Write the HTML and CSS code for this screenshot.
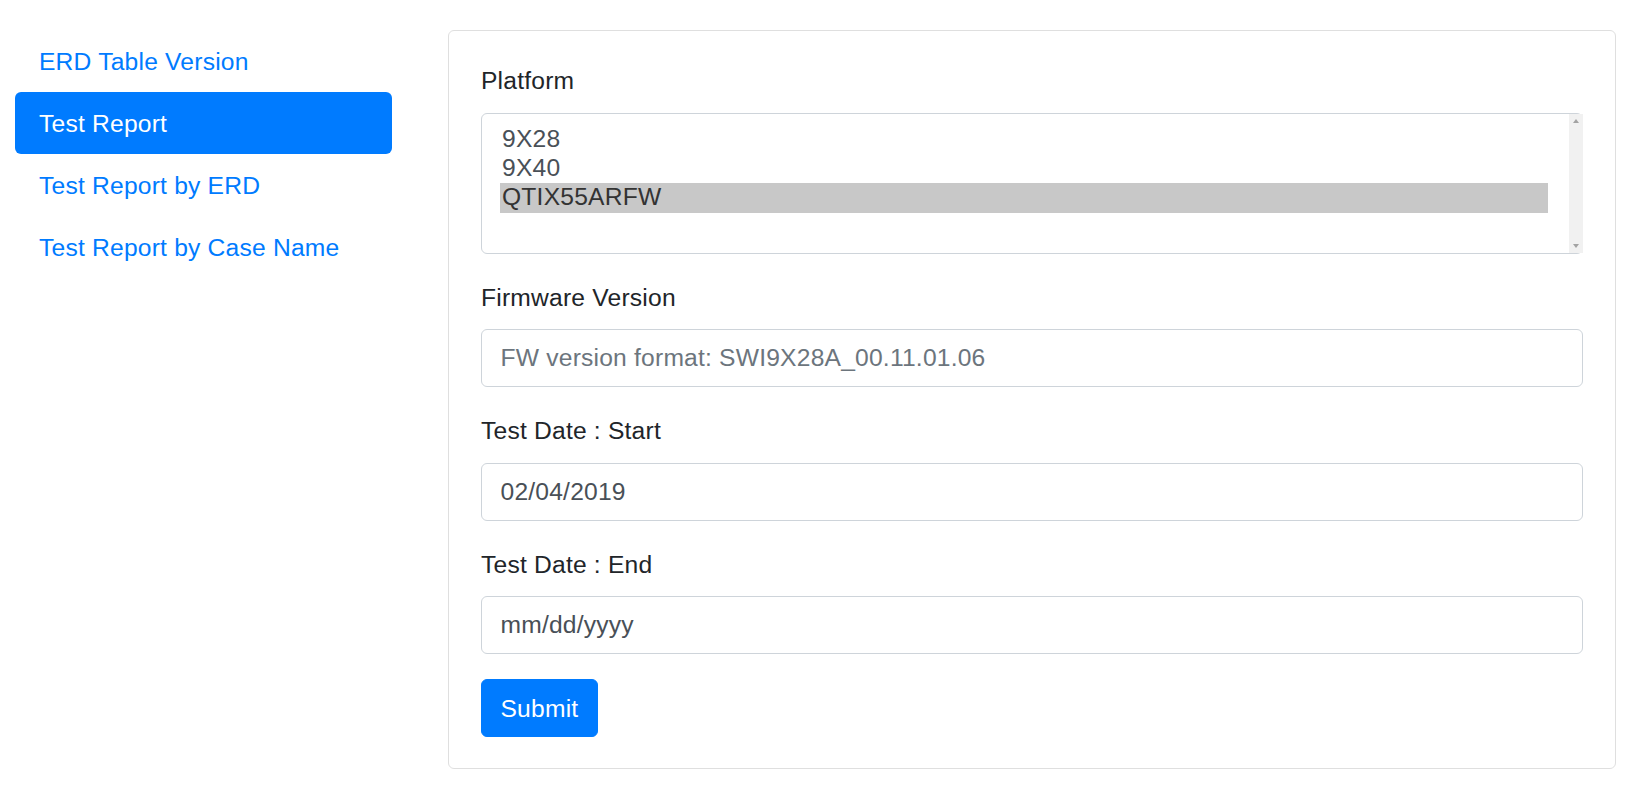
FILE: index.html
```html
<!DOCTYPE html>
<html lang="en">
<head>
<meta charset="utf-8">
<title>Test Report</title>
<link rel="stylesheet" href="styles.css">
</head>
<body>
<div class="page">
  <nav class="sidebar">
    <a class="nav-link" href="#">ERD Table Version</a>
    <a class="nav-link active" href="#">Test Report</a>
    <a class="nav-link" href="#">Test Report by ERD</a>
    <a class="nav-link" href="#">Test Report by Case Name</a>
  </nav>
  <main class="card">
    <form class="form">
      <div class="form-group">
        <label class="label" for="platform">Platform</label>
        <div class="listbox-wrap">
          <select class="listbox" id="platform" multiple size="4">
            <option>9X28</option>
            <option>9X40</option>
            <option selected>QTIX55ARFW</option>
          </select>
          <div class="scrollbar" aria-hidden="true">
            <span class="arrow arrow-up"></span>
            <span class="arrow arrow-down"></span>
          </div>
        </div>
      </div>
      <div class="form-group">
        <label class="label" for="fw">Firmware Version</label>
        <input class="control" id="fw" type="text" placeholder="FW version format: SWI9X28A_00.11.01.06">
      </div>
      <div class="form-group">
        <label class="label" for="start">Test Date : Start</label>
        <input class="control" id="start" type="text" value="02/04/2019">
      </div>
      <div class="form-group">
        <label class="label" for="end">Test Date : End</label>
        <input class="control control-date" id="end" type="text" placeholder="mm/dd/yyyy">
      </div>
      <button class="btn" type="button">Submit</button>
    </form>
  </main>
</div>
</body>
</html>
```

FILE: styles.css
```css
* {
  box-sizing: border-box;
}

html, body {
  margin: 0;
  padding: 0;
  background: #fff;
}

body {
  font-family: "Liberation Sans", Arial, sans-serif;
  font-size: 24.64px;
  line-height: 37px;
  letter-spacing: 0.2px;
  color: #212529;
}

.page {
  display: flex;
  align-items: flex-start;
  padding: 30px 14px 0 15px;
}

.sidebar {
  width: 377px;
  flex: 0 0 377px;
  display: flex;
  flex-direction: column;
}

.nav-link {
  display: block;
  padding: 12.5px 24px;
  line-height: 37px;
  color: #007bff;
  text-decoration: none;
  border-radius: 6px;
}

.nav-link.active {
  background: #007bff;
  color: #fff;
}

.card {
  flex: 1 1 auto;
  margin-left: 56px;
  border: 1px solid #dfdfdf;
  border-radius: 6px;
  padding: 31px 32px 31px 32px;
  background: #fff;
}

.form {
  display: flex;
  flex-direction: column;
  align-items: flex-start;
}

.form-group {
  width: 100%;
  margin-bottom: 25px;
  display: flex;
  flex-direction: column;
}

.label {
  display: block;
  line-height: 37px;
  margin-bottom: 13.5px;
  color: #212529;
}

.listbox-wrap {
  position: relative;
  width: 100%;
}

.listbox {
  display: block;
  width: 100%;
  height: 141px;
  padding: 11px 34px 11px 18px;
  border: 1px solid #ced4da;
  border-radius: 6px;
  font-family: "Liberation Sans", Arial, sans-serif;
  font-size: 24.64px;
  letter-spacing: 0.2px;
  color: #495057;
  background: #fff;
  overflow: hidden;
  outline: none;
}

.listbox option {
  padding: 0 2px;
  min-height: 0;
  height: 29.4px;
  line-height: 29.4px;
}

.listbox option:checked {
  background: #c8c8c8 linear-gradient(#c8c8c8, #c8c8c8);
  color: #333;
}

.scrollbar {
  position: absolute;
  top: 1px;
  right: 0;
  bottom: 1px;
  width: 14px;
  background: #f1f1f1;
}

.arrow {
  position: absolute;
  left: 3.5px;
  width: 0;
  height: 0;
  border-left: 3.5px solid transparent;
  border-right: 3.5px solid transparent;
}

.arrow-up {
  top: 5px;
  border-bottom: 4px solid #a3a3a3;
}

.arrow-down {
  bottom: 5px;
  border-top: 4px solid #a3a3a3;
}

.control {
  display: block;
  width: 100%;
  height: 58px;
  padding: 0 18.5px;
  border: 1px solid #ced4da;
  border-radius: 6px;
  font-family: "Liberation Sans", Arial, sans-serif;
  font-size: 24.64px;
  letter-spacing: 0.2px;
  line-height: 37px;
  color: #495057;
  background: #fff;
  outline: none;
}

.control::placeholder {
  color: #6c757d;
  opacity: 1;
}

.control-date::placeholder {
  color: #495057;
}

.btn {
  display: inline-block;
  height: 58px;
  padding: 0 18.5px;
  border: 1px solid #007bff;
  border-radius: 6px;
  background: #007bff;
  color: #fff;
  font-family: "Liberation Sans", Arial, sans-serif;
  font-size: 24.64px;
  letter-spacing: 0.2px;
  line-height: 37px;
  cursor: pointer;
}
```
